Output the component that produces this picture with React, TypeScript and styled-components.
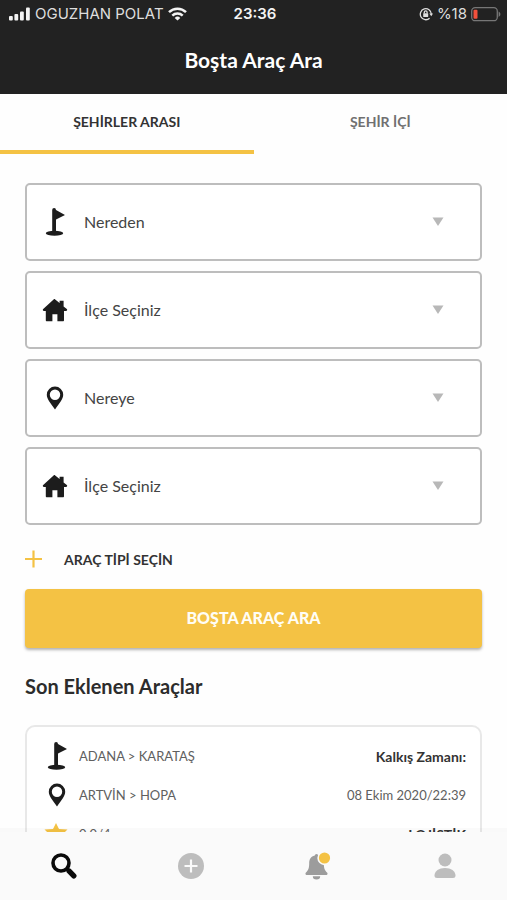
import React from "react";
import styled, { createGlobalStyle } from "styled-components";

const GlobalStyle = createGlobalStyle`
  *, *::before, *::after { box-sizing: border-box; }
  body { margin: 0; background: #ffffff; color: #333333; font-family: Lato, "Liberation Sans", sans-serif; }
  button, select { font-family: inherit; color: inherit; }
`;

const Shell = styled.div`
  display: flex;
  flex-direction: column;
  height: 100vh;
  background: #fefefe;
`;

const Header = styled.header`
  flex: none;
  background: #222222;
  color: #ffffff;
`;

const StatusBar = styled.div`
  display: grid;
  grid-template-columns: 1fr auto 1fr;
  align-items: center;
  height: 28px;
  padding: 0 6px 0 9px;
  font: 400 15px/20px Inter, "Liberation Sans", sans-serif;
  color: #dedede;
`;

const StatusGroup = styled.div<{ $end?: boolean }>`
  display: flex;
  align-items: center;
  justify-content: ${(p) => (p.$end ? "flex-end" : "flex-start")};
  gap: 4px;
  white-space: nowrap;
`;

const Clock = styled.time`
  font-weight: 600;
  color: #f4f4f4;
`;

const Title = styled.h1`
  margin: 0;
  padding: 18px 0 20px;
  font-size: 21px;
  line-height: 28px;
  font-weight: 700;
  text-align: center;
`;

const Tabs = styled.div`
  display: flex;
  flex: none;
`;

const Tab = styled.button<{ $active?: boolean }>`
  flex: 1;
  height: 60px;
  padding: 0 0 2px;
  border: 0;
  border-bottom: 4px solid ${(p) => (p.$active ? "#f4c244" : "transparent")};
  background: none;
  font-size: 14px;
  font-weight: 700;
  color: ${(p) => (p.$active ? "#333333" : "#707070")};
`;

const Content = styled.main`
  flex: 1;
  min-height: 0;
  overflow-y: auto;
  scrollbar-width: none;
  padding: 29px 25px;
`;

const Form = styled.form`
  display: flex;
  flex-direction: column;
  gap: 10px;
`;

const Field = styled.label`
  position: relative;
  display: flex;
  align-items: center;
  height: 78px;
  padding-left: 14px;
  border: 2px solid #bdbdbd;
  border-radius: 5px;
  background: #ffffff;
`;

const Select = styled.select`
  flex: 1;
  min-width: 0;
  height: 100%;
  margin-left: 15px;
  padding: 0 48px 2px 0;
  border: 0;
  outline: 0;
  appearance: none;
  background: transparent;
  font-size: 16px;
  color: #444444;
`;

const Arrow = styled.svg`
  position: absolute;
  right: 36px;
  top: 32px;
  pointer-events: none;
`;

const AddButton = styled.button`
  display: flex;
  align-items: center;
  gap: 22px;
  height: 44px;
  padding: 4px 0 0;
  border: 0;
  background: none;
  font-size: 14px;
  font-weight: 700;
`;

const SearchButton = styled.button`
  height: 59px;
  padding: 0 0 2px;
  border: 0;
  border-radius: 4px;
  background: #f4c244;
  box-shadow: 0 2px 3px rgba(0, 0, 0, 0.3);
  font-size: 16px;
  font-weight: 900;
  color: #fffdf5;
`;

const SectionTitle = styled.h2`
  margin: 24px 0 25px;
  font-size: 20px;
  line-height: 28px;
  font-weight: 700;
  color: #2c2c2c;
`;

const Card = styled.article`
  display: grid;
  gap: 1px;
  padding: 10px 14px 10px 16px;
  border: 2px solid #e8e8e8;
  border-radius: 10px;
  background: #ffffff;
`;

const CardRow = styled.div`
  display: flex;
  align-items: center;
  gap: 8px;
  height: 38px;
`;

const Route = styled.span`
  flex: 1;
  font-size: 13px;
  color: #606060;
`;

const Detail = styled.span<{ $strong?: boolean }>`
  font-size: ${(p) => (p.$strong ? "14px" : "13px")};
  font-weight: ${(p) => (p.$strong ? 700 : 400)};
  color: ${(p) => (p.$strong ? "#333333" : "#606060")};
`;

const BottomNav = styled.nav`
  position: relative;
  display: flex;
  flex: none;
  height: 68px;
  background: #fafafa;
  box-shadow: 0 -4px 0 rgba(0, 0, 0, 0.02);
`;

const NavButton = styled.button`
  display: flex;
  flex: 1;
  align-items: center;
  justify-content: center;
  padding: 0 0 0 2px;
  border: 0;
  background: none;
`;

const FlagIcon = () => (
  <svg width="28" height="28" viewBox="0 0 28 28" fill="#1c1c1c" aria-hidden="true">
    <ellipse cx="13.500" cy="25.300" rx="8.700" ry="2.500" />
    <path d="M11.200 2a1.900 1.900 0 0 1 3.800 0L24 6.900 15 11.500v13h-3.800z" />
  </svg>
);

const HomeIcon = () => (
  <svg width="28" height="28" viewBox="0 0 28 28" fill="#1c1c1c" aria-hidden="true">
    <path d="M13.900 3.200 18.600 7V4.800h4v5.600l3.200 2.700c.8.8.3 1.800-.8 1.800H23v9.400c0 .7-.4 1-1 1h-5.600v-7h-5v7H5.800c-.6 0-1-.3-1-1v-9.400H3c-1.100 0-1.600-1-.8-1.800L12.600 3.500c.4-.4.900-.5 1.300-.3z" />
  </svg>
);

const PinIcon = () => (
  <svg width="28" height="28" viewBox="0 0 28 28" fill="#1c1c1c" fillRule="evenodd" aria-hidden="true">
    <path d="M14 2.600a8.200 8.200 0 0 0-8.200 8.200c0 4.400 4 8.800 8.200 14.600 4.200-5.800 8.200-10.200 8.200-14.600a8.200 8.200 0 0 0-8.200-8.200zm0 2.900a5.200 5.200 0 1 1 0 10.400 5.200 5.200 0 0 1 0-10.400z" />
  </svg>
);

const StarIcon = () => (
  <svg width="28" height="28" viewBox="0 0 28 28" fill="#f4c244" aria-hidden="true">
    <path d="M13 3l3 6 8.500.600-6.300 6 1.800 8.300L13 20.500l-7 3.400 1.800-8.300-6.300-6 8.500-.6z" />
  </svg>
);

const PlusIcon = () => (
  <svg width="17" height="18" viewBox="0 0 17 18" stroke="#f4c244" strokeWidth="2.200" aria-hidden="true">
    <path d="M0 9h17M8.500 0.500v17" />
  </svg>
);

const SignalIcon = () => (
  <svg width="22" height="14" viewBox="0 0 22 14" fill="#f4f4f4" aria-hidden="true">
    <rect x="0" y="9" width="3.800" height="4.500" rx="1" />
    <rect x="5.400" y="7" width="3.800" height="6.500" rx="1" />
    <rect x="11" y="4.500" width="3.800" height="9" rx="1" />
    <rect x="17" y="0.500" width="3.800" height="13" rx="1" />
  </svg>
);

const WifiIcon = () => (
  <svg width="19" height="14" viewBox="0 0 19 14" fill="none" stroke="#f4f4f4" strokeWidth="2.500" aria-hidden="true">
    <path d="M1 5.200a12.200 12.200 0 0 1 17 0M4.300 8.600a7.500 7.500 0 0 1 10.400 0" />
    <path d="M9.500 13.500 6.700 10.900a4 4 0 0 1 5.600 0z" fill="#f4f4f4" stroke="none" />
  </svg>
);

const RotationLockIcon = () => (
  <svg width="14" height="14" viewBox="0 0 14 14" fill="none" stroke="#dedede" strokeWidth="1.300" aria-hidden="true">
    <path d="M10.600 11.200A5.500 5.500 0 1 1 12.300 7" />
    <path d="M10.300 6.400h3.700l-1.700 2.800z" fill="#dedede" stroke="none" />
    <rect x="4.200" y="6.200" width="5" height="3.900" rx="0.500" fill="#dedede" stroke="none" />
    <path d="M5.300 6.500V5.300a1.400 1.400 0 0 1 2.800 0v1.200" />
  </svg>
);

const BatteryIcon = () => (
  <svg width="30" height="15" viewBox="0 0 30 15" aria-hidden="true">
    <rect x="0.700" y="0.700" width="25.600" height="13" rx="3.500" fill="none" stroke="#777777" strokeWidth="1.300" />
    <path d="M27.600 4.500c2.400 1.200 2.400 4.200 0 5.400z" fill="#777777" />
    <rect x="2.500" y="2.700" width="4" height="9" rx="1" fill="#f2503c" />
  </svg>
);

const SearchIcon = () => (
  <svg width="26" height="26" viewBox="0 0 26 26" fill="none" stroke="#0a0a0a" aria-hidden="true">
    <circle cx="10" cy="10" r="8" strokeWidth="3.600" />
    <path d="M16 16l2.500 2.500" strokeWidth="3.400" />
    <path d="M18.200 18.200l4.600 4.600" strokeWidth="5.400" strokeLinecap="round" />
  </svg>
);

const AddCircleIcon = () => (
  <svg width="26" height="26" viewBox="0 0 26 26" aria-hidden="true">
    <circle cx="13" cy="13" r="13" fill="#bdbdbd" />
    <path d="M6.500 13h13M13 6.500v13" stroke="#fafafa" strokeWidth="2.200" />
  </svg>
);

const BellIcon = () => (
  <svg width="26" height="28" viewBox="0 0 26 28" aria-hidden="true">
    <path d="M9.800 3.600a1.700 1.700 0 0 1 3.400 0c4 .9 5.600 4 5.600 7.600 0 5.300 1 7 3.200 9.200 1.100 1.200.4 2.600-1 2.600H2c-1.400 0-2.100-1.400-1-2.600 2.200-2.200 3.200-3.900 3.200-9.200 0-3.600 1.600-6.700 5.600-7.600z" fill="#9c9c9c" />
    <path d="M7.800 24.200h7.400a3.700 3.200 0 0 1-7.400 0z" fill="#9c9c9c" />
    <circle cx="19.500" cy="6" r="7.200" fill="#fafafa" />
    <circle cx="19.500" cy="6" r="5.600" fill="#f4c244" />
  </svg>
);

const PersonIcon = () => (
  <svg width="22" height="26" viewBox="0 0 22 26" fill="#bdbdbd" aria-hidden="true">
    <circle cx="11" cy="7" r="6.500" />
    <path d="M.5 22.500C.5 18 5 15 11 15s10.500 3 10.500 7.500c0 1.700-.9 2.500-2.500 2.500H3C1.400 25 .5 24.200.5 22.500z" />
  </svg>
);

const fields = [
  { id: "from", text: "Nereden", label: "Nereden", Icon: FlagIcon },
  { id: "from-district", text: "İlçe Seçiniz", label: "Kalkış ilçesi", Icon: HomeIcon },
  { id: "to", text: "Nereye", label: "Nereye", Icon: PinIcon },
  { id: "to-district", text: "İlçe Seçiniz", label: "Varış ilçesi", Icon: HomeIcon },
];

const navItems = [
  { label: "Ara", Icon: SearchIcon },
  { label: "Ekle", Icon: AddCircleIcon },
  { label: "Bildirimler", Icon: BellIcon },
  { label: "Profil", Icon: PersonIcon },
];

export default function App() {
  return (
    <Shell lang="tr">
      <GlobalStyle />
      <Header>
        <StatusBar>
          <StatusGroup>
            <SignalIcon />
            OGUZHAN POLAT
            <WifiIcon />
          </StatusGroup>
          <Clock>23:36</Clock>
          <StatusGroup $end>
            <RotationLockIcon />
            <span>%18</span>
            <BatteryIcon />
          </StatusGroup>
        </StatusBar>
        <Title>Boşta Araç Ara</Title>
      </Header>
      <Tabs role="tablist">
        <Tab type="button" role="tab" aria-selected="true" $active>ŞEHİRLER ARASI</Tab>
        <Tab type="button" role="tab" aria-selected="false">ŞEHİR İÇİ</Tab>
      </Tabs>
      <Content>
        <Form onSubmit={(e) => e.preventDefault()}>
          {fields.map(({ id, text, label, Icon }) => (
            <Field key={id} htmlFor={id}>
              <Icon />
              <Select id={id} aria-label={label}>
                <option>{text}</option>
              </Select>
              <Arrow width="12" height="9" viewBox="0 0 12 9" fill="#b8b8b8" aria-hidden="true">
                <path d="M0.500 0.500h11L6 9z" />
              </Arrow>
            </Field>
          ))}
          <AddButton type="button">
            <PlusIcon />
            ARAÇ TİPİ SEÇİN
          </AddButton>
          <SearchButton type="submit">BOŞTA ARAÇ ARA</SearchButton>
        </Form>
        <SectionTitle>Son Eklenen Araçlar</SectionTitle>
        <Card>
          <CardRow>
            <FlagIcon />
            <Route>ADANA &gt; KARATAŞ</Route>
            <Detail $strong>Kalkış Zamanı:</Detail>
          </CardRow>
          <CardRow>
            <PinIcon />
            <Route>ARTVİN &gt; HOPA</Route>
            <Detail>08 Ekim 2020/22:39</Detail>
          </CardRow>
          <CardRow>
            <StarIcon />
            <Route>0.0/4</Route>
            <Detail $strong>LOJİSTİK</Detail>
          </CardRow>
        </Card>
      </Content>
      <BottomNav>
        {navItems.map(({ label, Icon }) => (
          <NavButton key={label} type="button" aria-label={label}>
            <Icon />
          </NavButton>
        ))}
      </BottomNav>
    </Shell>
  );
}
